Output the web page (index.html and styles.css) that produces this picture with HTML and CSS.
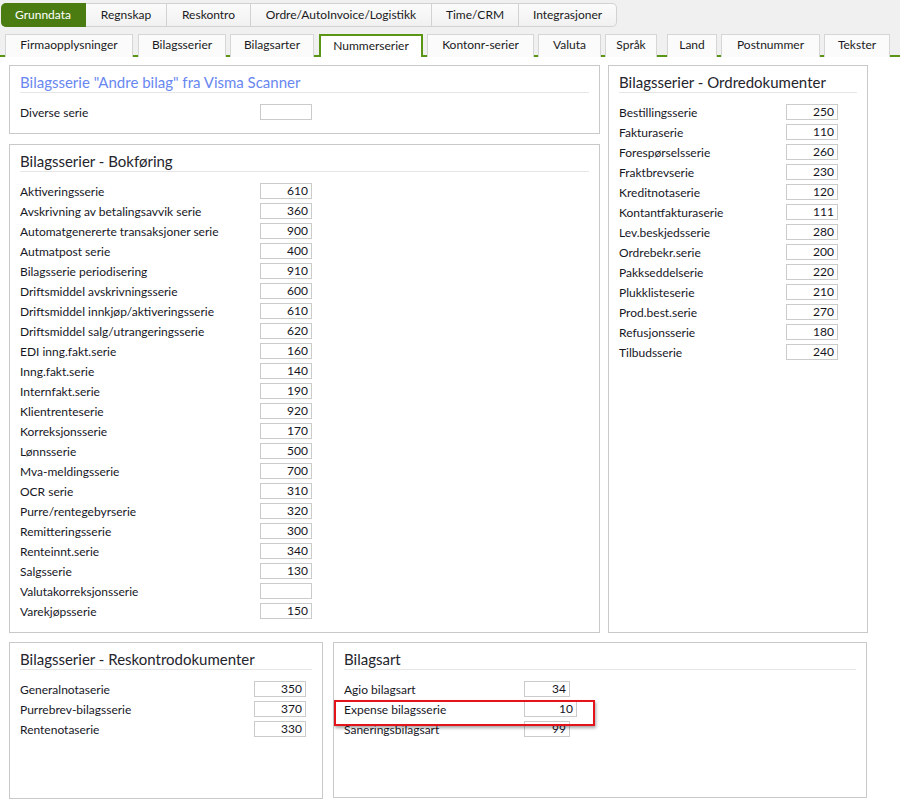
FILE: index.html
```html
<!DOCTYPE html>
<html lang="no">
<head>
<meta charset="utf-8">
<title>Nummerserier</title>
<link rel="stylesheet" href="styles.css">
</head>
<body>
<div class="header">
  <nav class="maintabs">
    <span class="mtab mtab-active">Grunndata</span>
    <span class="mtab">Regnskap</span>
    <span class="mtab">Reskontro</span>
    <span class="mtab">Ordre/AutoInvoice/Logistikk</span>
    <span class="mtab">Time/CRM</span>
    <span class="mtab mtab-last">Integrasjoner</span>
  </nav>
  <nav class="subtabs">
    <span class="stab">Firmaopplysninger</span>
    <span class="stab">Bilagsserier</span>
    <span class="stab">Bilagsarter</span>
    <span class="stab stab-active">Nummerserier</span>
    <span class="stab">Kontonr-serier</span>
    <span class="stab">Valuta</span>
    <span class="stab">Språk</span>
    <span class="stab">Land</span>
    <span class="stab">Postnummer</span>
    <span class="stab">Tekster</span>
  </nav>
</div>

<main class="content">
  <div class="toprow">
    <div class="leftcol">
      <section class="panel p-scanner">
        <h2 class="ptitle ptitle-blue">Bilagsserie "Andre bilag" fra Visma Scanner</h2>
        <div class="rows">
          <div class="row"><span class="lbl">Diverse serie</span><span class="field"></span></div>
        </div>
      </section>
      <section class="panel p-bok">
        <h2 class="ptitle">Bilagsserier - Bokføring</h2>
        <div class="rows">
          <div class="row"><span class="lbl">Aktiveringsserie</span><span class="field">610</span></div>
          <div class="row"><span class="lbl">Avskrivning av betalingsavvik serie</span><span class="field">360</span></div>
          <div class="row"><span class="lbl">Automatgenererte transaksjoner serie</span><span class="field">900</span></div>
          <div class="row"><span class="lbl">Autmatpost serie</span><span class="field">400</span></div>
          <div class="row"><span class="lbl">Bilagsserie periodisering</span><span class="field">910</span></div>
          <div class="row"><span class="lbl">Driftsmiddel avskrivningsserie</span><span class="field">600</span></div>
          <div class="row"><span class="lbl">Driftsmiddel innkjøp/aktiveringsserie</span><span class="field">610</span></div>
          <div class="row"><span class="lbl">Driftsmiddel salg/utrangeringsserie</span><span class="field">620</span></div>
          <div class="row"><span class="lbl">EDI inng.fakt.serie</span><span class="field">160</span></div>
          <div class="row"><span class="lbl">Inng.fakt.serie</span><span class="field">140</span></div>
          <div class="row"><span class="lbl">Internfakt.serie</span><span class="field">190</span></div>
          <div class="row"><span class="lbl">Klientrenteserie</span><span class="field">920</span></div>
          <div class="row"><span class="lbl">Korreksjonsserie</span><span class="field">170</span></div>
          <div class="row"><span class="lbl">Lønnsserie</span><span class="field">500</span></div>
          <div class="row"><span class="lbl">Mva-meldingsserie</span><span class="field">700</span></div>
          <div class="row"><span class="lbl">OCR serie</span><span class="field">310</span></div>
          <div class="row"><span class="lbl">Purre/rentegebyrserie</span><span class="field">320</span></div>
          <div class="row"><span class="lbl">Remitteringsserie</span><span class="field">300</span></div>
          <div class="row"><span class="lbl">Renteinnt.serie</span><span class="field">340</span></div>
          <div class="row"><span class="lbl">Salgsserie</span><span class="field">130</span></div>
          <div class="row"><span class="lbl">Valutakorreksjonsserie</span><span class="field"></span></div>
          <div class="row"><span class="lbl">Varekjøpsserie</span><span class="field">150</span></div>
        </div>
      </section>
    </div>
    <section class="panel p-ordre">
      <h2 class="ptitle">Bilagsserier - Ordredokumenter</h2>
      <div class="rows">
        <div class="row"><span class="lbl">Bestillingsserie</span><span class="field">250</span></div>
        <div class="row"><span class="lbl">Fakturaserie</span><span class="field">110</span></div>
        <div class="row"><span class="lbl">Forespørselsserie</span><span class="field">260</span></div>
        <div class="row"><span class="lbl">Fraktbrevserie</span><span class="field">230</span></div>
        <div class="row"><span class="lbl">Kreditnotaserie</span><span class="field">120</span></div>
        <div class="row"><span class="lbl">Kontantfakturaserie</span><span class="field">111</span></div>
        <div class="row"><span class="lbl">Lev.beskjedsserie</span><span class="field">280</span></div>
        <div class="row"><span class="lbl">Ordrebekr.serie</span><span class="field">200</span></div>
        <div class="row"><span class="lbl">Pakkseddelserie</span><span class="field">220</span></div>
        <div class="row"><span class="lbl">Plukklisteserie</span><span class="field">210</span></div>
        <div class="row"><span class="lbl">Prod.best.serie</span><span class="field">270</span></div>
        <div class="row"><span class="lbl">Refusjonsserie</span><span class="field">180</span></div>
        <div class="row"><span class="lbl">Tilbudsserie</span><span class="field">240</span></div>
      </div>
    </section>
  </div>

  <div class="bottomrow">
    <section class="panel p-resk">
      <h2 class="ptitle">Bilagsserier - Reskontrodokumenter</h2>
      <div class="rows">
        <div class="row"><span class="lbl">Generalnotaserie</span><span class="field">350</span></div>
        <div class="row"><span class="lbl">Purrebrev-bilagsserie</span><span class="field">370</span></div>
        <div class="row"><span class="lbl">Rentenotaserie</span><span class="field">330</span></div>
      </div>
    </section>
    <section class="panel p-art">
      <h2 class="ptitle">Bilagsart</h2>
      <div class="rows">
        <div class="row"><span class="lbl">Agio bilagsart</span><span class="field">34</span></div>
        <div class="row row-highlight"><span class="lbl">Expense bilagsserie</span><span class="field field-wide">10</span></div>
        <div class="row"><span class="lbl">Saneringsbilagsart</span><span class="field">99</span></div>
      </div>
    </section>
  </div>
</main>
</body>
</html>
```

FILE: styles.css
```css
* { box-sizing: border-box; }

html, body {
  margin: 0;
  padding: 0;
  background: #ffffff;
}

body {
  font-family: Lato, "Open Sans", "Noto Sans", sans-serif;
  font-size: 12px;
  color: #17171f;
  width: 900px;
  height: 809px;
  overflow: hidden;
}

/* ---------- header tabs ---------- */
.header {
  background: #f0f0f0;
}

.maintabs {
  display: grid;
  grid-template-columns: 85px 81px 84px 181px 87px 98px;
  justify-content: start;
  padding: 3px 0 0 1px;
  height: 34px;
  align-items: start;
}

.mtab {
  height: 24px;
  line-height: 22px;
  background: linear-gradient(#fbfbfb, #f1f1f1);
  border: 1px solid #d2d2d2;
  border-left: none;
  text-align: center;
  white-space: nowrap;
  color: #1a1a22;
}

.mtab-active {
  background: #4b7c12;
  border-color: #4b7c12;
  color: #ffffff;
  border-radius: 5px 0 0 5px;
}

.mtab-last {
  border-radius: 0 5px 5px 0;
}

.subtabs {
  display: grid;
  grid-template-columns: 128px 89px 84px 105px 107px 63px 52px 56px 99px 66px;
  column-gap: 4px;
  justify-content: start;
  padding-left: 5px;
  border-bottom: 2px solid #5b9516;
  height: 23px;
}

.stab {
  height: 23px;
  margin-bottom: -2px;
  line-height: 20px;
  background: #fbfbfb;
  border: 1px solid #d6d6d6;
  border-bottom: none;
  text-align: center;
  white-space: nowrap;
  color: #1a1a22;
}

.stab:nth-child(2),
.stab:nth-child(4) {
  margin-left: 1px;
}

.stab:nth-child(8) {
  margin-left: 6px;
}

.stab-active {
  background: #ffffff;
  border: 2px solid #5b9516;
  border-bottom: none;
  line-height: 19px;
  position: relative;
  z-index: 1;
}

/* ---------- content ---------- */
.content {
  padding: 8px 0 0 9px;
}

.toprow {
  display: flex;
  gap: 8px;
  align-items: stretch;
}

.leftcol {
  display: flex;
  flex-direction: column;
  gap: 10px;
  width: 591px;
}

.bottomrow {
  display: flex;
  gap: 10px;
  margin-top: 9px;
}

.panel {
  background: #ffffff;
  border: 1px solid #c9c9c9;
  padding: 0 0 11px 10px;
}

.ptitle {
  margin: 0 10px 0 0;
  padding: 7px 0 0 0;
  height: 27px;
  font-size: 15px;
  font-weight: normal;
  line-height: 19px;
  color: #24242c;
  border-bottom: 1px solid #e6e6e6;
}

.ptitle-blue {
  color: #6887f0;
}

.rows {
  padding-top: 9px;
}

.row {
  display: flex;
  align-items: center;
  height: 20px;
}

.lbl {
  white-space: nowrap;
}

.field {
  display: block;
  height: 16px;
  width: 52px;
  border: 1px solid #cbcbcb;
  background: #ffffff;
  text-align: right;
  padding-right: 3px;
  line-height: 14px;
  color: #15151d;
}

.p-scanner .lbl, .p-bok .lbl { width: 240px; }
.p-ordre { width: 260px; }
.p-ordre .lbl { width: 167px; }

.p-resk { width: 314px; height: 157px; }
.p-resk .lbl { width: 234px; }

.p-art { width: 534px; height: 156px; }
.p-art .lbl { width: 180px; }
.p-art .field { width: 46px; }
.p-art .field-wide { width: 53px; }

.row-highlight {
  position: relative;
}

.row-highlight::after {
  content: "";
  position: absolute;
  left: -10px;
  top: 1px;
  width: 257px;
  height: 22px;
  border: 2px solid #e3141b;
  box-shadow: 1px 2px 3px rgba(0, 0, 0, 0.35);
  pointer-events: none;
}
```
